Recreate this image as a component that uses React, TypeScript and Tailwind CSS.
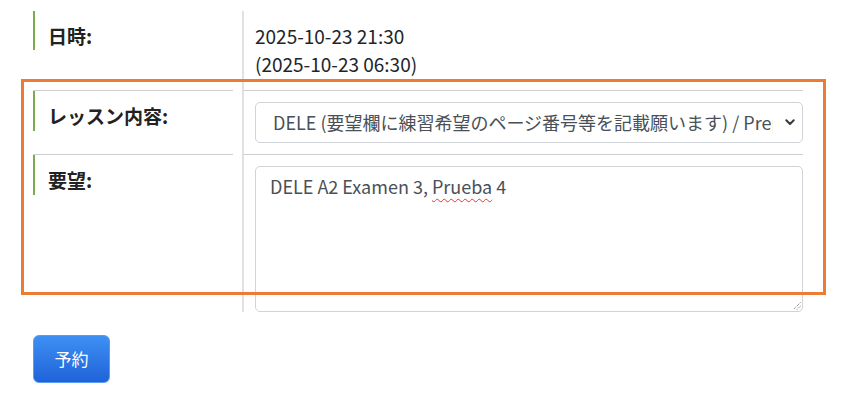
import React from 'react'

const green = 'border-[#7bab4a]'

function Label({ text, h }: { text: string; h: string }) {
  return (
    <div className={`border-l-2 ${green} ${h} pl-[13px] pt-[12px]`}>
      <div className="text-[19px] leading-[26px] font-bold text-[#222] whitespace-nowrap">{text}</div>
    </div>
  )
}

function Chevron() {
  return (
    <svg width="10" height="7" viewBox="0 0 10 7" className="shrink-0">
      <path d="M1.3 1.3 L5 5 L8.7 1.3" fill="none" stroke="#343a40" strokeWidth="2" strokeLinecap="round" strokeLinejoin="round" />
    </svg>
  )
}

function ResizeGrip() {
  return (
    <svg width="8" height="8" viewBox="0 0 8 8" className="absolute right-[1px] bottom-[1px]">
      <path d="M7.5 0.5 L0.5 7.5 M7.5 4 L4 7.5" stroke="#666" strokeWidth="1" strokeDasharray="1 1" />
    </svg>
  )
}

export default function App() {
  return (
    <div className="relative w-[849px] h-[393px] bg-white font-['Noto_Sans_CJK_JP','Noto_Sans',sans-serif] overflow-hidden">
      <div className="pt-[11px] pl-[33px] w-[803px]">
        {/* 日時 */}
        <div className="flex">
          <div className="w-[200px] shrink-0">
            <Label text="日時:" h="h-[39px]" />
          </div>
          <div className="ml-[9px] flex-1 min-w-0 border-l-2 border-[#e2e2e2] pl-[11px] pt-[11px] pb-[12px]">
            <div className="text-[19px] leading-[28px] text-[#212529]">
              <div>2025-10-23 21:30</div>
              <div>(2025-10-23 06:30)</div>
            </div>
          </div>
        </div>

        {/* レッスン内容 */}
        <div className="flex">
          <div className="w-[200px] shrink-0 border-t border-[#cfcfcf]">
            <Label text="レッスン内容:" h="h-[40px]" />
          </div>
          <div className="ml-[9px] flex-1 min-w-0 border-l-2 border-t border-l-[#e2e2e2] border-t-[#cfcfcf] pl-[11px] pt-[11px] pb-[11px]">
            <div className="h-[41px] rounded-[5px] border border-[#d0d4d8] flex items-center pl-[17px] pr-[7px] gap-[12px]">
              <div className="flex-1 min-w-0 overflow-hidden whitespace-nowrap text-[18px] text-[#495057]">
                DELE (要望欄に練習希望のページ番号等を記載願います) / Preparación DELE
              </div>
              <Chevron />
            </div>
          </div>
        </div>

        {/* 要望 */}
        <div className="flex">
          <div className="w-[200px] shrink-0 border-t border-[#cfcfcf]">
            <Label text="要望:" h="h-[40px]" />
          </div>
          <div className="ml-[9px] flex-1 min-w-0 border-l-2 border-t border-l-[#e2e2e2] border-t-[#cfcfcf] pl-[11px] pt-[11px]">
            <div className="relative h-[146px] rounded-[5px] border border-[#d0d4d8] pl-[14px] pt-[6px] text-[18px] leading-[27px] text-[#495057]">
              DELE A2 Examen 3,{' '}
              <span className="underline decoration-wavy decoration-[#e53935] decoration-1 underline-offset-[4px]">Prueba</span> 4
              <ResizeGrip />
            </div>
          </div>
        </div>

        <button className="mt-[23px] w-[77px] h-[48px] rounded-[6px] border border-[#5a9cf3] bg-gradient-to-b from-[#3f8ff4] to-[#1f63d9] text-white text-[17px] flex items-center justify-center">
          予約
        </button>
      </div>

      {/* orange highlight */}
      <div className="absolute left-[21px] top-[79px] w-[805px] h-[216px] border-[3px] border-[#ec7c35] pointer-events-none" />
    </div>
  )
}
